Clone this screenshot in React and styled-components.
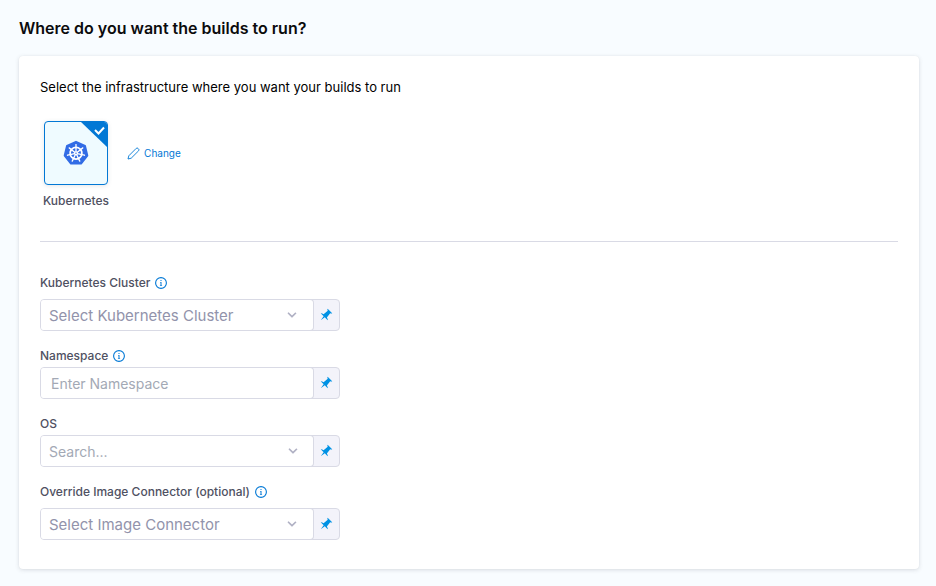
import React from "react";
import styled, { createGlobalStyle } from "styled-components";

const GlobalStyle = createGlobalStyle`
  *, *::before, *::after { box-sizing: border-box; }
  body {
    margin: 0;
    background: #f8fcff;
    color: #0b0b0d;
    font-family: Inter, "Liberation Sans", sans-serif;
  }
  button, input, select { font-family: inherit; }
`;

const Page = styled.main`
  padding: 18px 17px 17px 19px;
`;

const Title = styled.h2`
  margin: 0 0 18px;
  font-size: 16px;
  line-height: 20px;
  font-weight: 600;
`;

const Card = styled.section`
  padding: 23px 21px 29px;
  background: #fff;
  border-radius: 4px;
  box-shadow: 0 0 1px rgba(40, 41, 61, 0.08), 0 1px 4px rgba(96, 97, 112, 0.2);
`;

const Description = styled.p`
  margin: 0 0 26px;
  color: #000;
  font-size: 13px;
  line-height: 16px;
`;

const Infrastructure = styled.div`
  display: flex;
  align-items: flex-start;
  gap: 18px;
  padding: 0 3px 32px;
  border-bottom: 1px solid #d9dae5;
`;

const Choice = styled.div`
  display: flex;
  flex-direction: column;
  align-items: center;
  gap: 8px;
`;

const Tile = styled.button`
  position: relative;
  display: flex;
  align-items: center;
  justify-content: center;
  width: 64px;
  height: 64px;
  padding: 0;
  border: 1px solid #0278d5;
  border-radius: 4px;
  background: #effbff;
  box-shadow: 0 1px 4px rgba(96, 97, 112, 0.16);
  overflow: hidden;
  cursor: pointer;
`;

const SelectedCorner = styled.svg`
  position: absolute;
  top: 0;
  right: 0;
`;

const Caption = styled.span`
  color: #4f5162;
  font-size: 12px;
  line-height: 16px;
  font-weight: 500;
`;

const ChangeButton = styled.button`
  display: flex;
  align-items: center;
  gap: 4px;
  height: 64px;
  padding: 0;
  border: 0;
  background: none;
  color: #0278d5;
  font-size: 10px;
  line-height: 16px;
  cursor: pointer;
`;

const Form = styled.form`
  display: flex;
  flex-direction: column;
  gap: 17px;
  max-width: 300px;
  padding-top: 33px;
`;

const Field = styled.div`
  display: flex;
  flex-direction: column;
  gap: ${({ $tight }) => ($tight ? 3 : 8)}px;
`;

const LabelRow = styled.div`
  display: flex;
  align-items: center;
  gap: 5px;
  height: 16px;
  color: #4f5162;
  font-size: 12px;
  line-height: 16px;
  font-weight: 500;
`;

const InfoButton = styled.button`
  display: flex;
  padding: 0;
  border: 0;
  background: none;
  color: #0278d5;
`;

const Control = styled.div`
  display: flex;
  height: 32px;
  border: 1px solid #d9dae5;
  border-radius: 4px;
  background: #f3f3fa;
  overflow: hidden;
`;

const Entry = styled.div`
  display: grid;
  flex: 1;
  align-items: center;
  min-width: 0;
  margin: -1px 0;
  border: solid #d9dae5;
  border-width: 1px 1px 1px 0;
  border-radius: 0 4px 4px 0;
  background: #fff;

  & > * { grid-area: 1 / 1; }
`;

const Select = styled.select`
  appearance: none;
  width: 100%;
  height: 30px;
  padding: 1px 32px 0 8px;
  border: 0;
  outline: 0;
  background: none;
  color: #9293ab;
  font-size: 15px;
`;

const TextInput = styled.input`
  width: 100%;
  height: 30px;
  padding: 0 10px 0 ${({ $inset }) => $inset}px;
  border: 0;
  outline: 0;
  background: none;
  color: #4f5162;
  font-size: 14px;

  &::placeholder { color: #a3a9b5; opacity: 1; }
`;

const Chevron = styled.svg`
  justify-self: end;
  margin-right: ${({ $end }) => $end}px;
  pointer-events: none;
`;

const PinButton = styled.button`
  display: flex;
  align-items: center;
  justify-content: center;
  width: 25px;
  padding: 0 0 2px;
  border: 0;
  background: none;
  color: #0092e4;
  cursor: pointer;
`;

function KubernetesLogo() {
  const spokes = [0, 1, 2, 3, 4, 5, 6].map((n) => (n * 360) / 7);
  return (
    <svg width="26" height="26" viewBox="0 0 26 26" aria-hidden="true">
      <path
        d="M13 1.8 22 6 24.3 15.6 18 23.6H8L1.7 15.6 4 6Z"
        fill="#326ce5"
        stroke="#326ce5"
        strokeWidth="2"
        strokeLinejoin="round"
      />
      <g fill="none" stroke="#fff">
        <circle cx="13" cy="13.3" r="5.9" strokeWidth="1.7" />
        {spokes.map((angle) => (
          <path key={angle} d="M13 12V4.6" strokeWidth="1.3" strokeLinecap="round" transform={`rotate(${angle} 13 13.3)`} />
        ))}
      </g>
      <circle cx="13" cy="13.3" r="2" fill="#fff" />
      <circle cx="13" cy="13.3" r="0.7" fill="#326ce5" />
    </svg>
  );
}

function PencilIcon() {
  return (
    <svg width="13" height="13" viewBox="0 0 13 13" fill="none" stroke="currentColor" strokeWidth="0.9" strokeLinejoin="round" aria-hidden="true">
      <path d="M1 12 1.8 8.8 9.2 1.4Q10.1.5 11 1.4L11.6 2Q12.5 2.9 11.6 3.8L4.2 11.2Z" />
    </svg>
  );
}

function InfoIcon() {
  return (
    <svg width="12" height="12" viewBox="0 0 12 12" aria-hidden="true">
      <circle cx="6" cy="6" r="5.4" fill="none" stroke="currentColor" strokeWidth="1.1" />
      <path d="M5.5 3h1v1h-1zM5 5h1.5v3.5h-1V5.6H5zM4.9 8.4h2.2v.6H4.9z" fill="currentColor" />
    </svg>
  );
}

function ChevronIcon({ end }) {
  return (
    <Chevron $end={end} width="14" height="14" viewBox="0 0 16 16" fill="#b0b1c4" aria-hidden="true">
      <path d="M12 5c-.28 0-.53.11-.71.29L8 8.59l-3.29-3.3a1.003 1.003 0 00-1.42 1.42l4 4c.18.18.43.29.71.29s.53-.11.71-.29l4-4A1.003 1.003 0 0012 5z" />
    </Chevron>
  );
}

function PinIcon() {
  return (
    <svg width="13" height="13" viewBox="0 0 16 16" fill="currentColor" aria-hidden="true">
      <path d="M9.41.92c-.51.51-.41 1.5.15 2.56L4.34 7.54C2.8 6.48 1.45 6.05.92 6.58l3.54 3.54-3.54 4.95 4.95-3.54 3.54 3.54c.53-.53.1-1.88-.96-3.42l4.06-5.22c1.06.56 2.04.66 2.55.15L9.41.92z" />
    </svg>
  );
}

function FormField({ id, label, info, tight, children }) {
  return (
    <Field $tight={tight}>
      <LabelRow>
        <label htmlFor={id}>{label}</label>
        {info && (
          <InfoButton type="button" aria-label={`About ${label}`}>
            <InfoIcon />
          </InfoButton>
        )}
      </LabelRow>
      <Control>
        <Entry>{children}</Entry>
        <PinButton type="button" aria-label={`${label} value type`}>
          <PinIcon />
        </PinButton>
      </Control>
    </Field>
  );
}

export default function App() {
  return (
    <>
      <GlobalStyle />
      <Page>
        <Title>Where do you want the builds to run?</Title>
        <Card>
          <Description>Select the infrastructure where you want your builds to run</Description>
          <Infrastructure>
            <Choice>
              <Tile type="button" aria-pressed="true" aria-labelledby="kubernetes-caption">
                <KubernetesLogo />
                <SelectedCorner width="26" height="25" viewBox="0 0 26 25" aria-hidden="true">
                  <path d="M0 0H26V25Z" fill="#0278d5" />
                  <path d="M14 8 17.5 11.5 23 5.5" fill="none" stroke="#fff" strokeWidth="2" />
                </SelectedCorner>
              </Tile>
              <Caption id="kubernetes-caption">Kubernetes</Caption>
            </Choice>
            <ChangeButton type="button">
              <PencilIcon />
              Change
            </ChangeButton>
          </Infrastructure>
          <Form>
            <FormField id="cluster" label="Kubernetes Cluster" info>
              <Select id="cluster" defaultValue="">
                <option value="">Select Kubernetes Cluster</option>
              </Select>
              <ChevronIcon end={14} />
            </FormField>
            <FormField id="namespace" label="Namespace" info tight>
              <TextInput id="namespace" type="text" placeholder="Enter Namespace" $inset={10} />
            </FormField>
            <FormField id="os" label="OS" tight>
              <TextInput id="os" type="text" role="combobox" aria-expanded="false" placeholder="Search..." $inset={8} />
              <ChevronIcon end={13} />
            </FormField>
            <FormField id="connector" label="Override Image Connector (optional)" info>
              <Select id="connector" defaultValue="">
                <option value="">Select Image Connector</option>
              </Select>
              <ChevronIcon end={14} />
            </FormField>
          </Form>
        </Card>
      </Page>
    </>
  );
}
